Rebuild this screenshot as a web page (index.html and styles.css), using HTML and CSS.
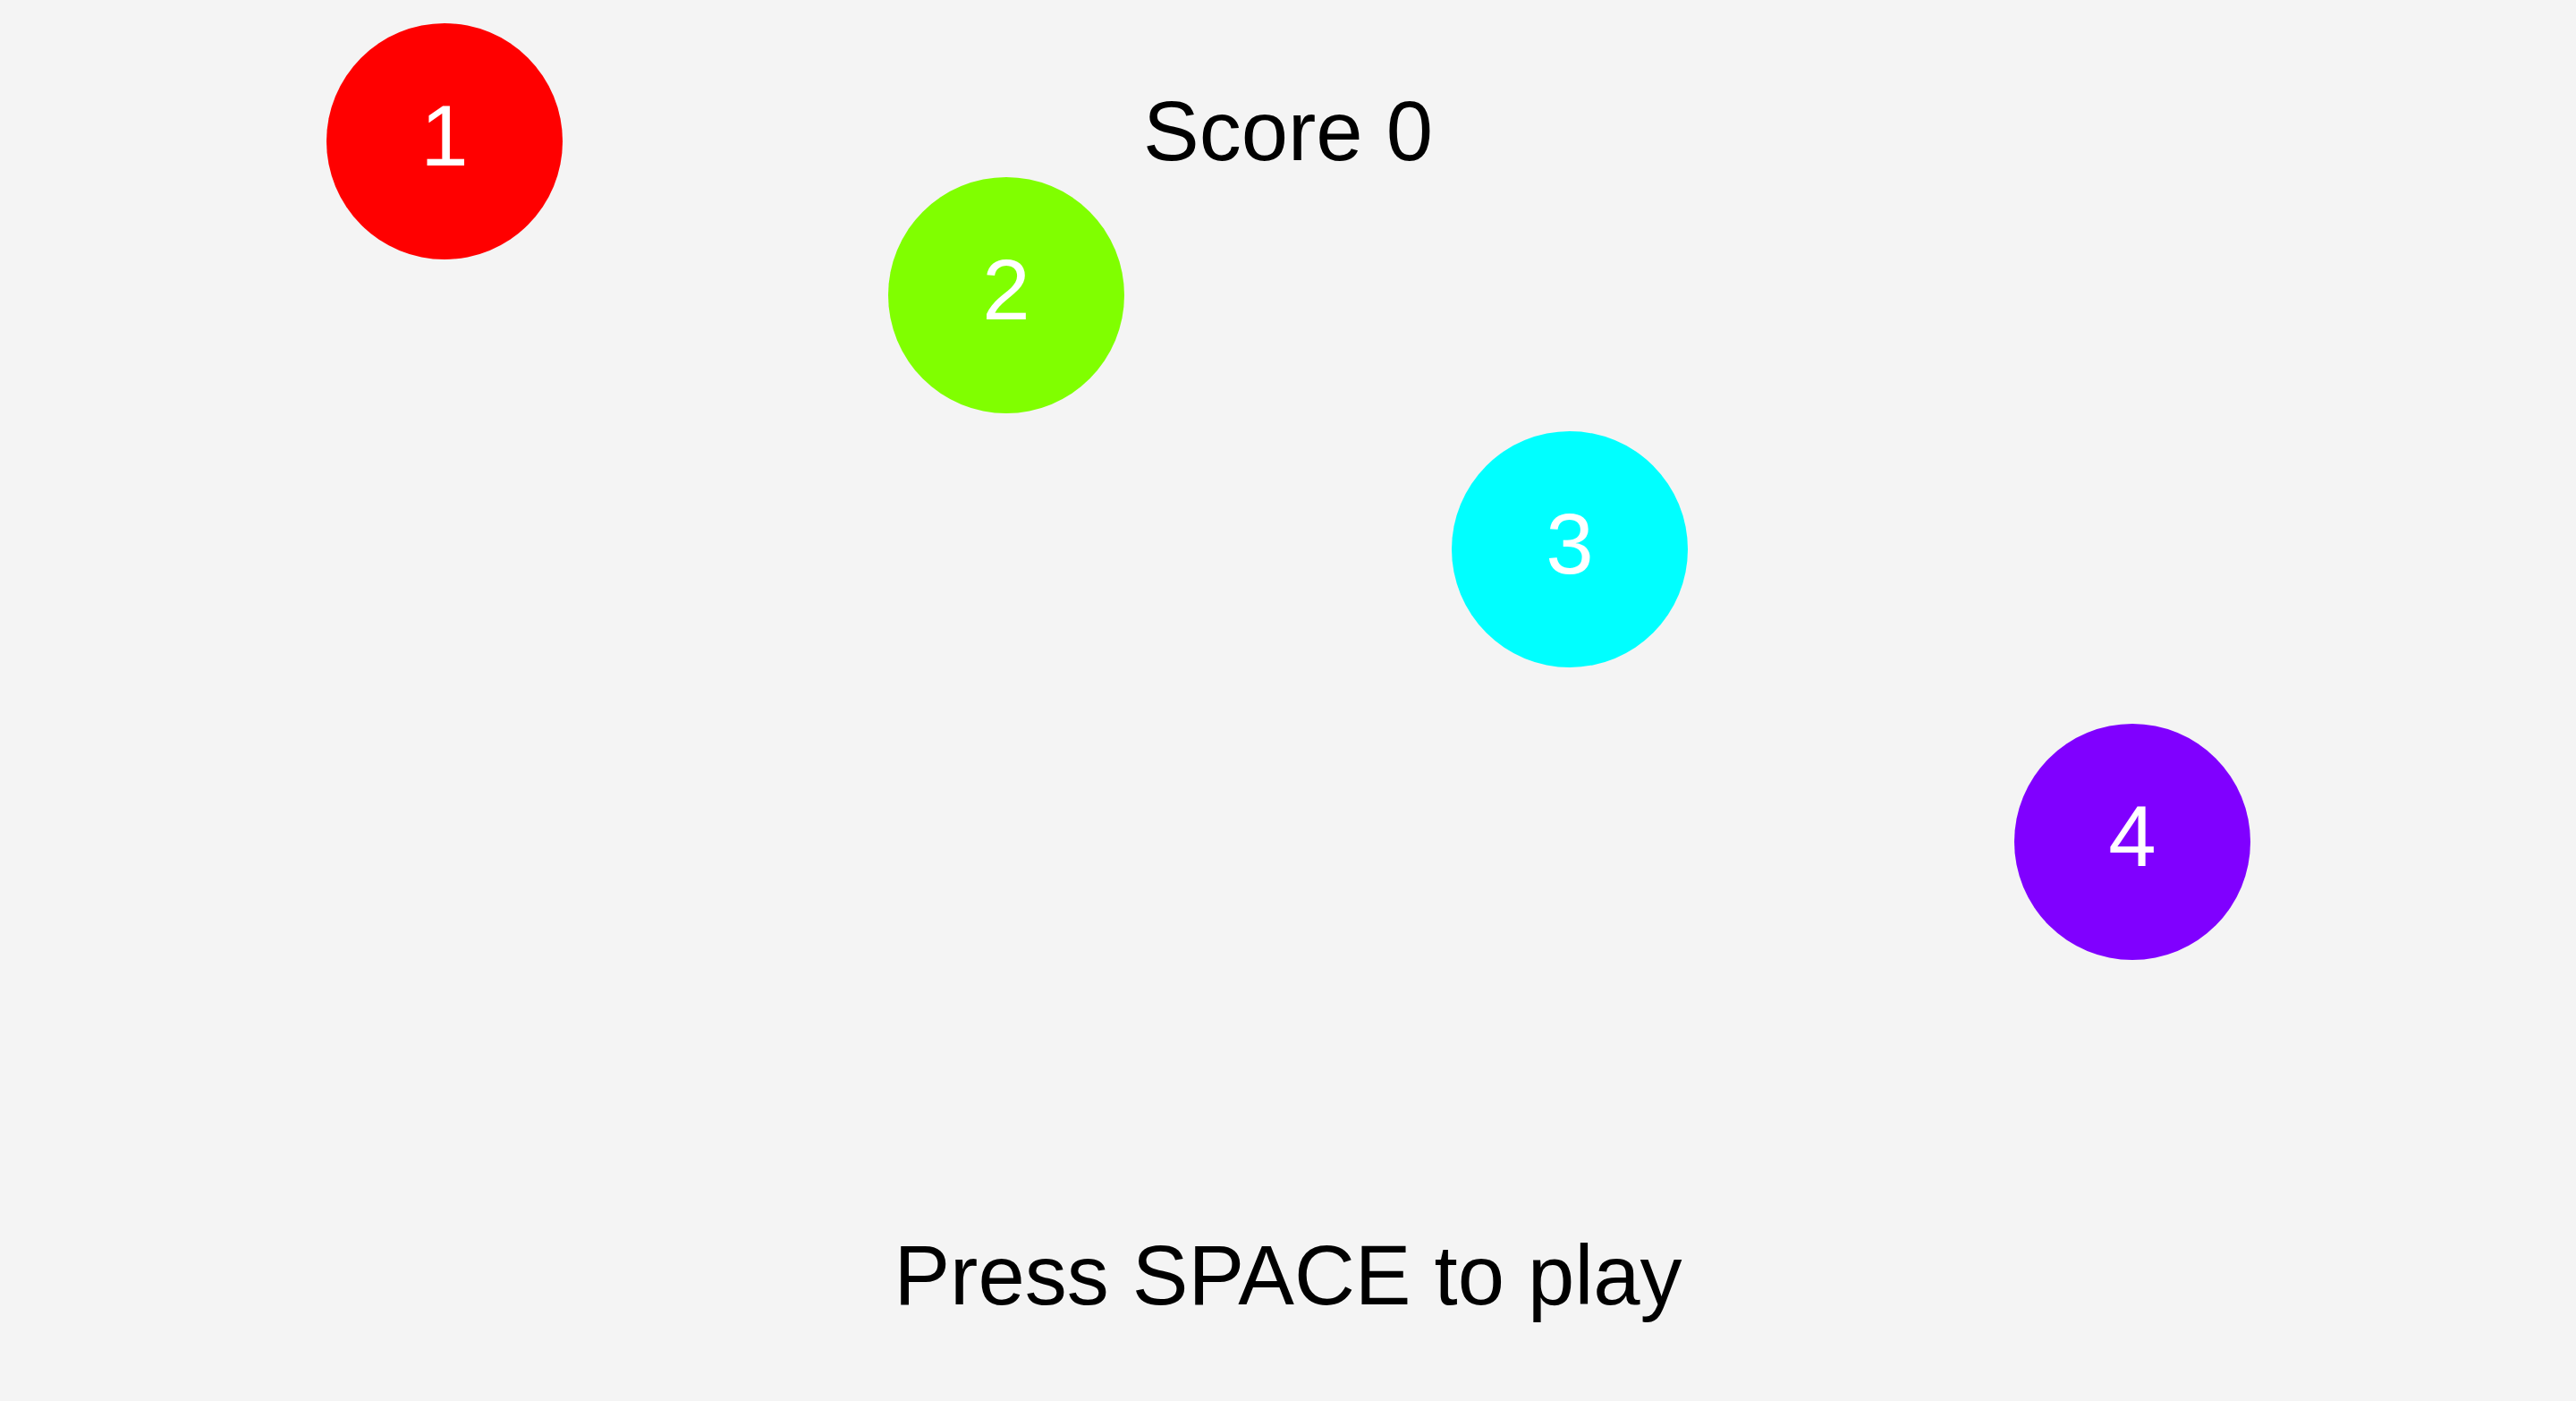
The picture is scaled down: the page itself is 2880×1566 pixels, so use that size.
FILE: index.html
```html
<!DOCTYPE html>
<html lang="en">
<head>
<meta charset="utf-8">
<title>Score</title>
<link rel="stylesheet" href="styles.css">
</head>
<body>
<main class="stage">
  <div class="score">Score 0</div>
  <div class="ball ball-red">1</div>
  <div class="ball ball-green">2</div>
  <div class="ball ball-cyan">3</div>
  <div class="ball ball-purple">4</div>
  <div class="prompt">Press SPACE to play</div>
</main>
</body>
</html>
```

FILE: styles.css
```css
html, body {
  margin: 0;
  padding: 0;
  background: #f4f4f4;
}

.stage {
  position: relative;
  width: 2880px;
  height: 1566px;
  box-sizing: border-box;
  padding: 100px 0 93px;
  display: flex;
  flex-direction: column;
  justify-content: space-between;
  align-items: center;
  font-family: "Liberation Sans", Arial, sans-serif;
  color: #000;
  overflow: hidden;
}

.score,
.prompt {
  font-size: 94px;
  line-height: 94px;
  white-space: nowrap;
}

.ball {
  position: absolute;
  width: 264px;
  height: 264px;
  border-radius: 50%;
  box-sizing: border-box;
  padding-bottom: 12px;
  display: flex;
  align-items: center;
  justify-content: center;
  color: #fff;
  font-size: 96px;
  line-height: 96px;
}

.ball-red { left: 365px; top: 26px; background: #ff0000; }
.ball-green { left: 993px; top: 198px; background: #80ff00; }
.ball-cyan { left: 1623px; top: 482px; background: #00ffff; }
.ball-purple { left: 2252px; top: 809px; background: #8000ff; }
```
